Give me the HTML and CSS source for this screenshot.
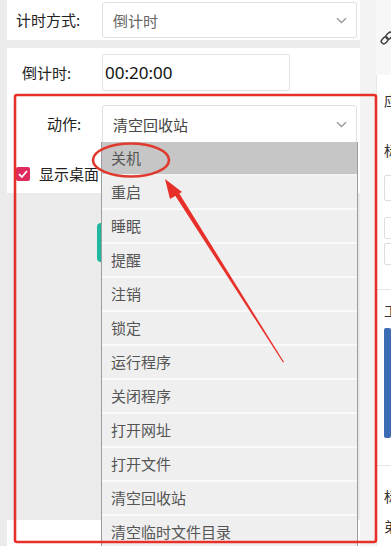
FILE: index.html
```html
<!DOCTYPE html>
<html lang="zh-CN">
<head>
<meta charset="utf-8">
<title>动作设置</title>
<link rel="stylesheet" href="styles.css">
</head>
<body>
<div class="app">
  <div class="left">
    <div class="sec sec-top">
      <span class="label label-mode">计时方式:</span>
      <div class="select select-mode">
        <span class="select-text muted">倒计时</span>
        <svg class="chev" width="11" height="7" viewBox="0 0 11 7"><path d="M1 1.2 L5.5 5.5 L10 1.2" fill="none" stroke="#9a9a9a" stroke-width="1.4"/></svg>
      </div>
    </div>
    <div class="sec sec-main">
      <div class="row row-time">
        <span class="label label-time">倒计时:</span>
        <div class="input">00:20:00</div>
      </div>
      <div class="row row-action">
        <span class="label label-action">动作:</span>
        <div class="select select-action">
          <span class="select-text">清空回收站</span>
          <svg class="chev" width="11" height="7" viewBox="0 0 11 7"><path d="M1 1.2 L5.5 5.5 L10 1.2" fill="none" stroke="#9a9a9a" stroke-width="1.4"/></svg>
        </div>
      </div>
      <div class="row row-check">
        <span class="checkbox"><svg width="14" height="14" viewBox="0 0 14 14"><path d="M3 7.2 L5.9 10 L11 4" fill="none" stroke="#fff" stroke-width="1.8"/></svg></span>
        <span class="check-label">显示桌面</span>
      </div>
    </div>
    <div class="sec-grey">
      <div class="teal-btn"></div>
    </div>
    <div class="sec sec-bottom"></div>
  </div>
  <div class="gutter"></div>
  <div class="right">
    <div class="right-head">
      <svg width="16" height="16" viewBox="0 0 16 16"><g fill="none" stroke="#444" stroke-width="1.5" transform="rotate(-45 8 8)"><rect x="1" y="5.5" width="7.5" height="5" rx="2.5"/><rect x="7.5" y="5.5" width="7.5" height="5" rx="2.5"/></g></svg>
    </div>
    <div class="right-card">
      <div class="rc-text rc-t1">应</div>
      <div class="rc-text rc-t2">标</div>
      <div class="rc-box rc-b1"></div>
      <div class="rc-box rc-b2"></div>
      <div class="rc-box rc-b3"></div>
      <div class="rc-sep"></div>
      <div class="rc-text rc-t3">工</div>
      <div class="rc-blue"></div>
      <div class="rc-sep rc-sep2"></div>
      <div class="rc-text rc-t4">标</div>
      <div class="rc-text rc-t5">弟</div>
    </div>
  </div>

  <ul class="dropdown">
    <li class="active">关机</li>
    <li>重启</li>
    <li>睡眠</li>
    <li>提醒</li>
    <li>注销</li>
    <li>锁定</li>
    <li>运行程序</li>
    <li>关闭程序</li>
    <li>打开网址</li>
    <li>打开文件</li>
    <li>清空回收站</li>
    <li>清空临时文件目录</li>
  </ul>

  <svg class="annot" width="391" height="546" viewBox="0 0 391 546">
    <rect x="15" y="95" width="361" height="447" rx="2" fill="none" stroke="#e8302a" stroke-width="2.6"/>
    <ellipse cx="131" cy="160" rx="38" ry="16.5" fill="none" stroke="#e03a2e" stroke-width="2.6"/>
    <path d="M172.5 191.5 L176.5 189 L284 362 L283 362.5 Z" fill="#e8302a"/>
    <path d="M165 179 L182 192 L170 199 Z" fill="#e8302a"/>
  </svg>
</div>
</body>
</html>
```
FILE: styles.css
```css
* { box-sizing: border-box; }
html, body { margin: 0; padding: 0; }
body {
  width: 391px;
  height: 546px;
  overflow: hidden;
  background: #ececec;
  font-family: "Noto Sans CJK SC", "Noto Sans", sans-serif;
  font-size: 15px;
  color: #222;
}
.app {
  position: relative;
  display: flex;
  width: 391px;
  height: 546px;
}
.left {
  width: 360px;
  padding-left: 7px;
  display: flex;
  flex-direction: column;
  background: #ebebeb;
}
.sec { background: #fff; }
.sec-top {
  height: 40px;
  display: flex;
  align-items: center;
  margin-bottom: 8px;
}
.label { line-height: 20px; }
.label-mode { padding-left: 9px; width: 95px; }
.label-time { padding-left: 15px; width: 95px; }
.label-action { padding-left: 40px; width: 95px; }
.select {
  display: flex;
  align-items: center;
  justify-content: space-between;
  border: 1px solid #e0e0e0;
  border-radius: 3px;
  background: #fff;
  padding: 0 9px 0 10px;
}
.select-mode { width: 255px; height: 36px; }
.select-action { width: 255px; height: 39px; }
.select-text { color: #444; }
.select-text.muted { color: #666; }
.sec-main {
  height: 145px;
  display: flex;
  flex-direction: column;
}
.row { display: flex; align-items: center; }
.row-time { height: 48px; padding-top: 1px; }
.input {
  width: 188px;
  height: 37px;
  border: 1px solid #e3e3e3;
  border-radius: 2px;
  padding-left: 2px;
  display: flex;
  align-items: center;
  font-family: "Noto Sans", sans-serif;
  font-size: 17px;
  color: #111;
}
.row-action { height: 54px; padding-top: 2px; }
.row-check { height: 43px; padding-left: 9px; padding-top: 4px; }
.checkbox {
  width: 14px;
  height: 14px;
  border-radius: 2px;
  background: #df2a5d;
  display: flex;
}
.check-label { margin-left: 9px; color: #222; }
.sec-grey { flex: 1; padding-top: 30px; }
.teal-btn {
  margin-left: 90px;
  width: 60px;
  height: 39px;
  border-radius: 4px;
  background: #1fb89e;
}
.sec-bottom { height: 26px; }
.gutter {
  width: 16px;
  background: #f3f3f3;
}
.right {
  width: 15px;
  display: flex;
  flex-direction: column;
  background: #f7f7f7;
  overflow: hidden;
}
.right-head {
  height: 75px;
  padding: 29px 0 0 3px;
}
.right-card {
  flex: 1;
  background: #fff;
  border-left: 1px solid #e6e6e6;
  padding-left: 7px;
  display: flex;
  flex-direction: column;
}
.rc-text { font-size: 14px; color: #333; line-height: 20px; white-space: nowrap; }
.rc-t1 { margin-top: 15px; }
.rc-t2 { margin-top: 30px; }
.rc-box { height: 22px; border: 1px solid #ddd; border-radius: 2px; width: 20px; }
.rc-b1 { margin-top: 15px; height: 26px; }
.rc-b2 { margin-top: 16px; }
.rc-b3 { margin-top: 4px; }
.rc-sep { margin: 24px 0 0 -7px; border-top: 1px solid #e4e4e4; }
.rc-t3 { margin-top: 10px; }
.rc-blue { margin-top: 8px; height: 110px; background: #3a6db3; border-radius: 2px; }
.rc-sep2 { margin-top: 27px; }
.rc-t4 { margin-top: 20px; }
.rc-t5 { margin-top: 10px; }
.dropdown {
  position: absolute;
  left: 101px;
  top: 142px;
  width: 257px;
  margin: 0;
  padding: 0;
  list-style: none;
  border-left: 1px solid #9c9c9c;
  border-right: 1px solid #9c9c9c;
  background: #efefef;
}
.dropdown li {
  height: 34px;
  line-height: 32px;
  padding-left: 9px;
  color: #555;
  border-bottom: 2px solid #fafafa;
}
.dropdown li.active {
  background: #c6c6c6;
  border-bottom-color: #f3f3f3;
}
.annot {
  position: absolute;
  left: 0;
  top: 0;
  pointer-events: none;
}
```
